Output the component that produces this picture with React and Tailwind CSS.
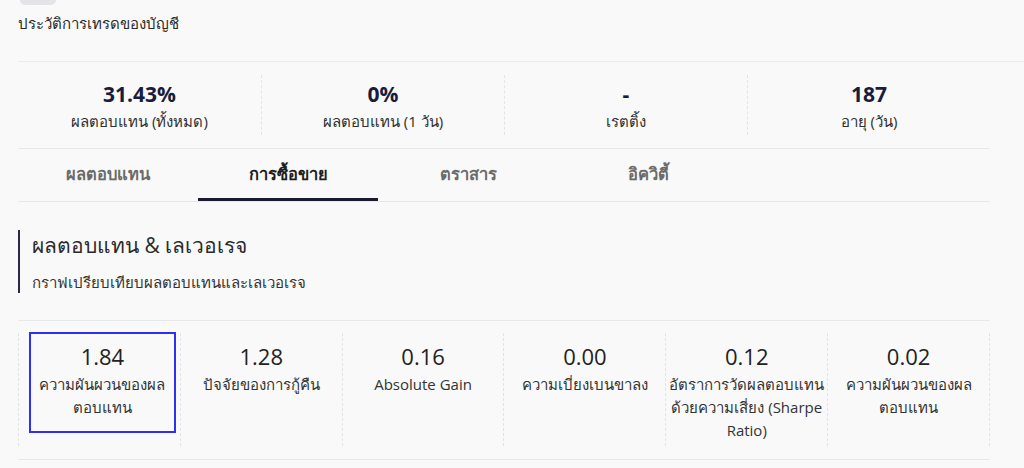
import React from 'react';

const stats = [
  { value: '31.43%', label: 'ผลตอบแทน (ทั้งหมด)' },
  { value: '0%', label: 'ผลตอบแทน (1 วัน)' },
  { value: '-', label: 'เรตติ้ง' },
  { value: '187', label: 'อายุ (วัน)' },
];

const tabs = ['ผลตอบแทน', 'การซื้อขาย', 'ตราสาร', 'อิควิตี้'];

const metrics = [
  { value: '1.84', label: 'ความผันผวนของผลตอบแทน' },
  { value: '1.28', label: 'ปัจจัยของการกู้คืน' },
  { value: '0.16', label: 'Absolute Gain' },
  { value: '0.00', label: 'ความเบี่ยงเบนขาลง' },
  { value: '0.12', label: 'อัตราการวัดผลตอบแทนด้วยความเสี่ยง (Sharpe Ratio)' },
  { value: '0.02', label: 'ความผันผวนของผลตอบแทน' },
];

const App = () => {
  return (
    <div
      className="h-[468px] w-[1024px] overflow-hidden bg-[#f9f9f9] text-[#333]"
      style={{ fontFamily: '"Open Sans", "Noto Sans", sans-serif' }}
    >
      {/* top bar */}
      <div className="pl-[18px]">
        <div className="ml-[2px] h-[5px] w-[36px] rounded-b-[6px] bg-[#e3e3e8]" />
        <div className="mt-[8px] text-[15px] leading-[20px] text-[#2a2a2a]">ประวัติการเทรดของบัญชี</div>
      </div>
      <div className="ml-[18px] mt-[28px] border-t border-[#ececec]" />

      <div className="ml-[18px] w-[972px]">
        {/* stats */}
        <div className="grid h-[86px] grid-cols-4 items-center">
          {stats.map((s, i) => (
            <div
              key={s.label}
              className={`flex h-[60px] flex-col items-center justify-center ${i > 0 ? 'border-l border-dashed border-[#e4e4e4]' : ''}`}
            >
              <div className="mt-[1px] text-[21px] font-bold leading-[28px] text-[#1b1b3b]">{s.value}</div>
              <div className="mt-[3px] text-[15px] leading-[20px] text-[#2f2f2f]">{s.label}</div>
            </div>
          ))}
        </div>

        {/* tabs */}
        <div className="flex h-[54px] border-y border-[#e8e8e8]">
          {tabs.map((t, i) => (
            <div
              key={t}
              className={`flex w-[180px] items-center justify-center border-b-[3px] pt-[2px] text-[16.5px] font-bold ${
                i === 1 ? 'border-[#1a1a33] text-[#1e1e1e]' : 'border-transparent text-[#6a6a6a]'
              }`}
            >
              {t}
            </div>
          ))}
        </div>

        {/* section heading */}
        <div className="mt-[28px] border-l-2 border-[#2a2a44] pl-[12px]">
          <div className="pt-[1px] text-[21px] leading-[28px] text-[#2a2a2a]">ผลตอบแทน &amp; เลเวอเรจ</div>
          <div className="mt-[13px] pb-[1px] text-[15px] leading-[20px] text-[#333]">กราฟเปรียบเทียบผลตอบแทนและเลเวอเรจ</div>
        </div>

        <div className="mt-[27px] border-t border-[#e8e8e8]" />

        {/* metrics */}
        <div className="mt-[12px] grid grid-cols-6 border-r border-dashed border-[#e4e4e4]">
          {metrics.map((m, i) => (
            <div key={m.value + i} className="h-[113px] border-l border-dashed border-[#e4e4e4]">
              <div
                className={`-mt-[1px] flex flex-col items-center pt-[9px] text-center ${
                  i === 0
                    ? 'ml-[10px] mr-[4px] h-[101px] border-2 border-[#2e2ef5] px-[4px]'
                    : 'mx-[1px] px-[1px]'
                }`}
              >
                <div className={`text-[22px] leading-[26px] text-[#222] ${i === 0 ? '' : 'pt-[2px]'}`}>{m.value}</div>
                <div className="mt-[4px] text-[15px] leading-[23px] text-[#333]">{m.label}</div>
              </div>
            </div>
          ))}
        </div>

        <div className="mt-[13px] border-t border-[#e8e8e8]" />
      </div>
    </div>
  );
};

export default App;
